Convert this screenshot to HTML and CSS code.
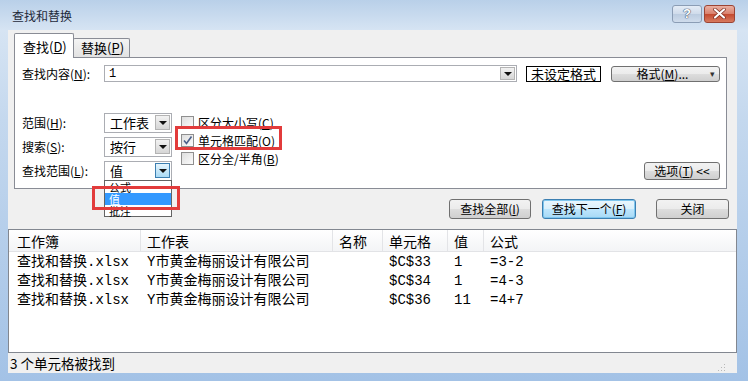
FILE: index.html
```html
<!DOCTYPE html>
<html lang="zh-CN">
<head>
    <meta charset="UTF-8">
    <meta name="viewport" content="width=device-width, initial-scale=1.0">
    <title>查找和替换</title>
    <link rel="stylesheet" href="styles.css">
</head>
<body>

<div class="window">
    <div class="titlebar">
        <span class="title">查找和替换</span>
        <div class="caption-btns">
            <div class="cap help">?</div>
            <div class="cap close">
                <svg width="13" height="11" viewBox="0 0 13 11">
                    <path d="M2 1.5 L11 9.5 M11 1.5 L2 9.5" stroke="#7a2a1c" stroke-width="3.6" stroke-linecap="round"/>
                    <path d="M2 1.5 L11 9.5 M11 1.5 L2 9.5" stroke="#fff" stroke-width="2.2" stroke-linecap="round"/>
                </svg>
            </div>
        </div>
    </div>

    <div class="client">
        <div class="top">
            <div class="tabs">
                <div class="tab active">查找(<u>D</u>)</div>
                <div class="tab">替换(<u>P</u>)</div>
            </div>
            <div class="panel">
                <div class="find-row">
                    <span class="lbl">查找内容(<u>N</u>):</span>
                    <div class="combo wide">
                        <span class="val">1</span>
                        <span class="arrow"></span>
                    </div>
                    <div class="fmt-box">未设定格式</div>
                    <div class="btn fmt-btn">格式(<u>M</u>)...<span class="drop-dot">▾</span></div>
                </div>

                <div class="opts">
                    <div class="opt-grid">
                        <span class="lbl">范围(<u>H</u>):</span>
                        <div class="combo sel"><span class="val">工作表</span><span class="arrow"></span></div>
                        <span class="lbl">搜索(<u>S</u>):</span>
                        <div class="combo sel"><span class="val">按行</span><span class="arrow"></span></div>
                        <span class="lbl">查找范围(<u>L</u>):</span>
                        <div class="combo sel open">
                            <span class="val">值</span><span class="arrow"></span>
                            <div class="droplist">
                                <div class="item">公式</div>
                                <div class="item picked">值</div>
                                <div class="item">批注</div>
                                <div class="mark mark-list"></div>
                            </div>
                        </div>
                    </div>

                    <div class="checks">
                        <div class="check"><span class="box"></span>区分大小写(<u>C</u>)</div>
                        <div class="check">
                            <span class="box">
                                <svg width="11" height="11" viewBox="0 0 11 11">
                                    <path d="M2 5.5 L4.5 8.5 L9.5 1.5" fill="none" stroke="#4a5f8a" stroke-width="1.6"/>
                                </svg>
                            </span>单元格匹配(<u>O</u>)
                            <div class="mark mark-check"></div>
                        </div>
                        <div class="check"><span class="box"></span>区分全/半角(<u>B</u>)</div>
                    </div>

                    <div class="btn opt-btn">选项(<u>T</u>) &lt;&lt;</div>
                </div>
            </div>
        </div>

        <div class="actions">
            <div class="btn act-all">查找全部(<u>I</u>)</div>
            <div class="btn act-next default">查找下一个(<u>F</u>)</div>
            <div class="btn act-close">关闭</div>
        </div>

        <div class="results">
            <div class="row head">
                <span>工作簿</span><span>工作表</span><span>名称</span><span>单元格</span><span>值</span><span>公式</span>
            </div>
            <div class="row">
                <span>查找和替换.xlsx</span><span>Y市黄金梅丽设计有限公司</span><span></span><span>$C$33</span><span>1</span><span>=3-2</span>
            </div>
            <div class="row">
                <span>查找和替换.xlsx</span><span>Y市黄金梅丽设计有限公司</span><span></span><span>$C$34</span><span>1</span><span>=4-3</span>
            </div>
            <div class="row">
                <span>查找和替换.xlsx</span><span>Y市黄金梅丽设计有限公司</span><span></span><span>$C$36</span><span>11</span><span>=4+7</span>
            </div>
        </div>

        <div class="status">
            <span>3 个单元格被找到</span>
            <svg class="grip" width="8" height="8" viewBox="0 0 8 8">
                <rect x="6" y="0" width="1" height="1" fill="#b8b8b8"/>
                <rect x="3" y="3" width="1" height="1" fill="#b8b8b8"/>
                <rect x="6" y="3" width="1" height="1" fill="#b8b8b8"/>
                <rect x="0" y="6" width="1" height="1" fill="#b8b8b8"/>
                <rect x="3" y="6" width="1" height="1" fill="#b8b8b8"/>
                <rect x="6" y="6" width="1" height="1" fill="#b8b8b8"/>
            </svg>
        </div>
    </div>
</div>

</body>
</html>
```

FILE: styles.css
```css
* {
    box-sizing: border-box;
}
body {
    margin: 0;
    font-family: "Noto Sans CJK SC", "Liberation Sans", sans-serif;
    font-size: 12px;
    color: #000;
}
u {
    text-decoration: underline;
    text-underline-offset: 1px;
}
.window {
    width: 748px;
    height: 381px;
    background: linear-gradient(to bottom, #b9d0e9 0, #d6e4f3 30px, #c4d8ee 120px, #a3c2e6 100%);
    padding-bottom: 8px;
    display: flex;
    flex-direction: column;
}

/* title bar */
.titlebar {
    height: 30px;
    display: flex;
    align-items: center;
    padding: 0 13px 0 12px;
}
.title {
    font-size: 12px;
    line-height: 14px;
    margin-top: 2px;
    color: #1e2a3a;
}
.caption-btns {
    margin-left: auto;
    display: flex;
    gap: 2px;
    margin-top: -3px;
}
.cap {
    height: 18px;
    border-radius: 3px;
    display: flex;
    align-items: center;
    justify-content: center;
}
.help {
    width: 30px;
    border: 1px solid #8b9db5;
    background: linear-gradient(to bottom, #e4ecf6 0, #cfdbea 50%, #bccce0 51%, #cfdcec 100%);
    color: #fff;
    font-family: "Liberation Sans", sans-serif;
    font-weight: bold;
    font-size: 13px;
    text-shadow: 0 0 1px #44546e, 0 0 1px #44546e, 0 0 1px #44546e;
}
.close {
    width: 31px;
    border: 1px solid #9b4434;
    background: linear-gradient(to bottom, #eab0a2 0, #d9806c 50%, #c4492f 51%, #d77a5f 100%);
}

/* client area */
.client {
    margin: 0 11px 0 8px;
    height: 343px;
    background: #f0f0f0;
    display: flex;
    flex-direction: column;
}
.top {
    padding: 3px 10px 0 6px;
}
.tabs {
    display: flex;
    align-items: flex-end;
    height: 25px;
    margin-bottom: -1px;
    position: relative;
    z-index: 1;
}
.tab {
    height: 19px;
    width: 57px;
    margin-bottom: 1px;
    border: 1px solid #898c95;
    border-bottom: none;
    background: linear-gradient(to bottom, #f4f4f4, #e2e2e2);
    font-size: 13px;
    line-height: 18px;
    padding-left: 7px;
    border-radius: 2px 2px 0 0;
}
.tab.active {
    width: 60px;
    height: 25px;
    margin-bottom: 0;
    background: #fff;
    line-height: 26px;
    padding-left: 8px;
    margin-right: -1px;
    position: relative;
    z-index: 1;
}
.panel {
    height: 132px;
    border: 1px solid #898c95;
    background: #fff;
    padding: 7px 6px 7px 7px;
}
.lbl {
    line-height: 16px;
    white-space: nowrap;
}
.find-row {
    display: flex;
    align-items: center;
    height: 17px;
}
.find-row .lbl {
    width: 82px;
}
.combo {
    position: relative;
    border: 1px solid #abadb3;
    background: #fff;
    display: flex;
    align-items: center;
}
.combo .val {
    padding-left: 4px;
    line-height: 16px;
}
.arrow {
    position: absolute;
    right: 1px;
    top: 1px;
    bottom: 1px;
    width: 15px;
    border: 1px solid #b4b4b4;
    background: linear-gradient(to bottom, #f2f2f2, #d6d6d6);
}
.arrow::after {
    content: "";
    position: absolute;
    left: 3px;
    top: 50%;
    margin-top: -2px;
    border-left: 4px solid transparent;
    border-right: 4px solid transparent;
    border-top: 4px solid #111;
}
.combo.wide {
    width: 413px;
    height: 17px;
}
.combo.wide .val {
    font-family: "Liberation Mono", monospace;
    font-size: 12px;
}
.fmt-box {
    margin-left: 9px;
    width: 75px;
    height: 16px;
    border: 1px solid #000;
    text-align: center;
    line-height: 14px;
    font-size: 13px;
}
.btn {
    border: 1px solid #707070;
    border-radius: 3px;
    background: linear-gradient(to bottom, #f2f2f2 0, #ebebeb 50%, #dddddd 51%, #cfcfcf 100%);
    display: flex;
    align-items: center;
    justify-content: center;
    line-height: 16px;
    white-space: nowrap;
}
.fmt-btn {
    margin-left: auto;
    width: 109px;
    height: 16px;
    position: relative;
    padding-right: 6px;
}
.drop-dot {
    position: absolute;
    right: 4px;
    top: -1px;
    font-size: 9px;
    color: #333;
}

/* options block */
.opts {
    display: flex;
    margin-top: 31px;
    height: 68px;
}
.opt-grid {
    display: grid;
    grid-template-columns: 82px 68px;
    grid-auto-rows: 20px;
    row-gap: 4px;
    align-items: center;
}
.combo.sel {
    height: 20px;
}
.combo.sel .val {
    font-size: 13px;
    padding-left: 5px;
}
.combo.sel .arrow {
    right: 1px;
    top: 1px;
    bottom: 2px;
}
.combo.open .arrow {
    border-color: #3c7fb1;
    background: linear-gradient(to bottom, #e6f5fd, #a9daf5);
}
.droplist {
    position: absolute;
    top: 100%;
    left: -1px;
    width: 68px;
    height: 37px;
    border: 1px solid #646464;
    background: #fff;
}
.droplist .item {
    height: 12px;
    line-height: 12px;
    font-size: 11px;
    padding-left: 4px;
    overflow: hidden;
}
.droplist .item.picked {
    height: 12px;
    background: #3399ff;
    color: #fff;
    margin: 0;
}
.mark {
    position: absolute;
    border: 3px solid #e23b3b;
}
.mark-list {
    left: -13px;
    top: 5px;
    width: 88px;
    height: 24px;
}
.checks {
    margin-left: 9px;
    display: flex;
    flex-direction: column;
}
.check {
    position: relative;
    height: 18px;
    display: flex;
    align-items: center;
    font-size: 12px;
    white-space: nowrap;
}
.box {
    width: 13px;
    height: 13px;
    border: 1px solid #8f8f8f;
    background: linear-gradient(135deg, #dedede, #fbfbfb);
    margin-right: 4px;
    display: flex;
    align-items: center;
    justify-content: center;
}
.mark-check {
    left: -6px;
    top: -5px;
    width: 107px;
    height: 24px;
}
.opt-btn {
    margin-left: auto;
    align-self: flex-end;
    margin-bottom: 1px;
    width: 76px;
    height: 18px;
}

/* action buttons */
.actions {
    display: flex;
    justify-content: flex-end;
    margin-top: 10px;
    height: 20px;
    padding-right: 8px;
}
.act-all {
    width: 82px;
    margin-right: 11px;
}
.act-next {
    width: 94px;
    margin-right: 20px;
}
.act-close {
    width: 73px;
}
.btn.default {
    border-color: #3c7fb1;
    background: linear-gradient(to bottom, #eaf6fd 0, #d9f0fc 50%, #bee6fd 51%, #a7d9f5 100%);
    box-shadow: inset 0 0 0 1px #7ec6ee;
}

/* result list */
.results {
    margin-top: 10px;
    height: 124px;
    border: 1px solid #828790;
    background: #fff;
}
.row {
    display: grid;
    grid-template-columns: 132px 192px 50px 65px 36px 1fr;
    height: 19px;
    font-family: "Liberation Mono", "Noto Sans CJK SC", monospace;
    font-size: 14px;
    line-height: 19px;
}
.row span {
    padding-left: 6px;
    white-space: nowrap;
    overflow: hidden;
}
.row span:first-child {
    padding-left: 8px;
}
.row.head {
    height: 22px;
    line-height: 22px;
    font-family: "Noto Sans CJK SC", sans-serif;
    background: linear-gradient(to bottom, #fff, #f3f4f6);
    border-bottom: 1px solid #e2e3e6;
    margin-bottom: 1px;
}
.row.head span {
    border-right: 1px solid #e3e4e7;
}
.row.head span:last-child {
    border-right: none;
}
.status {
    height: 20px;
    display: flex;
    align-items: center;
    padding-left: 2px;
    padding-right: 11px;
    font-size: 13.5px;
}
.grip {
    margin-left: auto;
    margin-top: 10px;
}
```
